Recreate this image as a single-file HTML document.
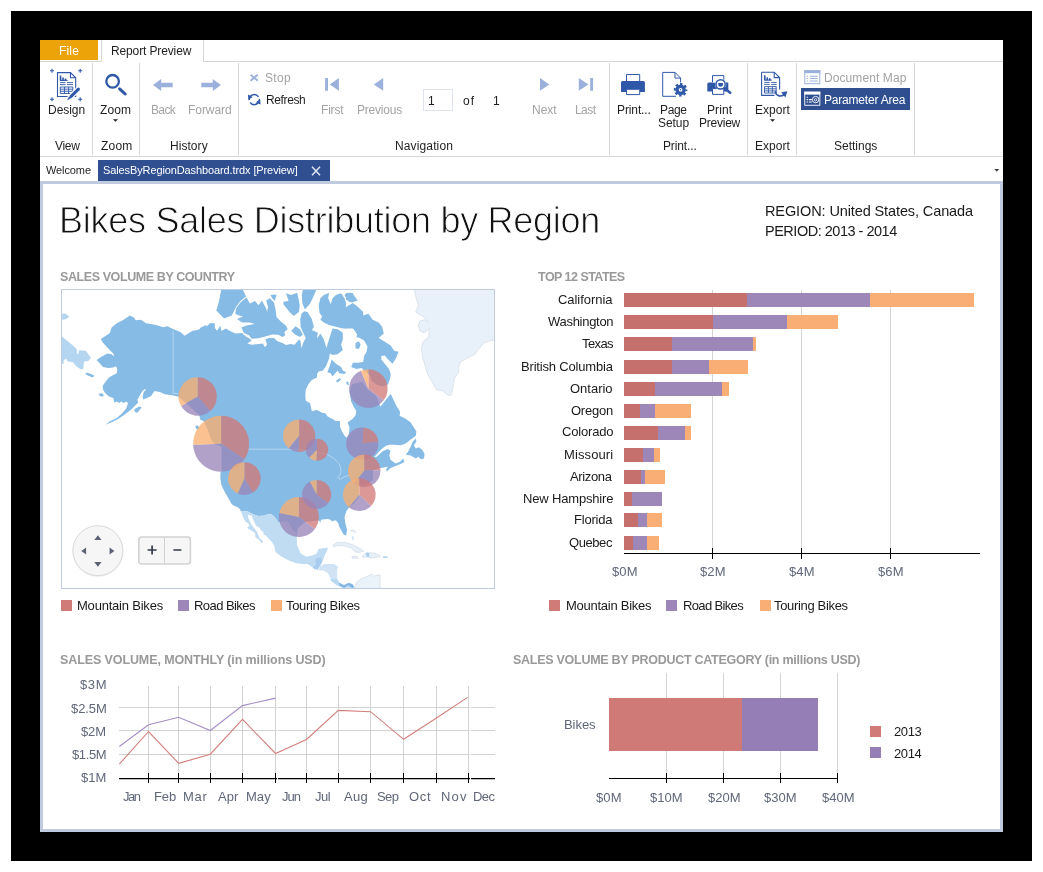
<!DOCTYPE html>
<html><head><meta charset="utf-8">
<style>
*{box-sizing:border-box;margin:0;padding:0}
html,body{width:1043px;height:872px;background:#fff;overflow:hidden}
body{font-family:"Liberation Sans",sans-serif;position:relative;color:#222}
.abs{position:absolute}
.t{position:absolute;white-space:nowrap;line-height:1;will-change:transform}
.sep{position:absolute;width:1px;background:#d6d6d6;top:63px;height:92px}
svg{position:absolute;overflow:visible}
</style></head><body>
<div class="abs" style="left:11px;top:11px;width:1021px;height:850px;background:#000"></div>
<div class="abs" style="left:40px;top:40px;width:963px;height:792px;background:#fff"></div>
<!-- ribbon tab row -->
<div class="abs" style="left:40px;top:40px;width:58px;height:20px;background:#eca30a"></div>
<div class="abs" style="left:40px;top:61px;width:963px;height:1px;background:#d6d6d6"></div>
<div class="abs" style="left:101px;top:40px;width:103px;height:22px;background:#fff;border-left:1px solid #d6d6d6;border-right:1px solid #d6d6d6"></div>
<div class="abs" style="left:40px;top:156px;width:963px;height:1px;background:#d6d6d6"></div>
<div class="sep" style="left:92px"></div><div class="sep" style="left:139px"></div><div class="sep" style="left:238px"></div>
<div class="sep" style="left:609px"></div><div class="sep" style="left:747px"></div><div class="sep" style="left:796px"></div><div class="sep" style="left:914px"></div>
<!-- doc tabs -->
<div class="abs" style="left:98px;top:160px;width:232px;height:21px;background:#2f4f91"></div>
<!-- report area -->
<div class="abs" style="left:40px;top:181px;width:963px;height:651px;border:3px solid #c0cbe0;background:#fff"></div>
<!-- ribbon icons -->
<div class="abs" style="left:801px;top:88px;width:109px;height:22px;background:#2f4f91"></div>
<div class="abs" style="left:423px;top:89px;width:30px;height:22px;border:1px solid #dfe4ec;background:#fff"></div>
<svg width="1043" height="200" style="left:0;top:0" viewBox="0 0 1043 200">
<g fill="none" stroke="#2f58a8" stroke-width="1">
 <!-- design icon -->
 <path d="M50 70.7h4M52 68.7v4M78.2 70.7h4M80.2 68.7v4M50 99.2h4M52 97.2v4M78.2 99.2h4M80.2 97.2v4" stroke-width="1.1"/>
 <path d="M57.5 72.6h13l5.2 5.2v18.7h-18.2z M70.5 72.6v5.2h5.2" stroke-width="1.1"/>
 <path d="M60.5 75.5v5M63 77.5v3M65.5 78.5v2" stroke-width="1.6"/>
 <path d="M60 80.4h7.5" stroke-width="1.2"/>
 <path d="M60 82.6h5.5M67 82.6h6M60 84.6h5.5M67 84.6h6" stroke-width="0.9"/>
 <path d="M60.3 87h12.5v6.5h-12.5zM60.3 89.2h12.5M60.3 91.3h12.5M64.5 87v6.5M68.6 87v6.5" stroke-width="0.9"/>
 <path d="M78.6 88.9L69.2 98.3" stroke="#fff" stroke-width="5.4" stroke-linecap="butt"/>
 <path d="M78.4 89.1L71 96.5" stroke-width="3.1" stroke-linecap="round"/>
 <path d="M69.2 96.8l-1.6 2.9 3-1.4z" fill="#2f58a8" stroke-width="0.5"/>
 <!-- zoom icon -->
 <circle cx="112.6" cy="81.3" r="6.3" stroke-width="2.3"/>
 <path d="M119.6 88.8L125.2 94" stroke-width="3" stroke-linecap="round"/>
 <!-- refresh -->
 <path d="M249.2 100.2a5.1 5.1 0 0 1 9.3-3.4" stroke-width="1.4"/>
 <path d="M259.4 98.8a5.1 5.1 0 0 1 -9.3 3.5" stroke-width="1.4"/>
 <path d="M247.9 94.6l0.5 5.2 4.3-2.9z" fill="#2f58a8" stroke="none"/>
 <path d="M260.6 104.6l-0.5-5.2-4.3 2.9z" fill="#2f58a8" stroke="none"/>
</g>
<g fill="#1e1e1e"><path d="M113 119.2h5l-2.5 2.6z"/><path d="M770 119.2h5l-2.5 2.6z"/><path d="M994.3 169h5l-2.5 2.8z" fill="#444"/></g>
<g fill="#9cb0dc">
 <!-- back / forward -->
 <path d="M153 85l8.2-6v3.8h11.5v4.4h-11.5v3.8z"/>
 <path d="M221 85l-8.2-6v3.8h-11.5v4.4h11.5v3.8z"/>
 <!-- stop -->
 <path d="M250.5 74.6L257.8 80.8M257.8 74.6L250.5 80.8" stroke="#9cb0dc" stroke-width="1.9" fill="none"/>
 <!-- first prev next last -->
 <path d="M325.1 78h2.9v12.7h-2.9zM329.8 84.4l9.1-6.4v12.7z"/>
 <path d="M373.8 84.4l9.4-6.4v12.7z"/>
 <path d="M549.3 84.4l-9.3-6.4v12.7z"/>
 <path d="M590.2 78h2.9v12.7h-2.9zM588.4 84.4l-9.6-6.4v12.7z"/>
</g>
<!-- print -->
<g fill="#2f58a8" stroke="none">
 <path d="M622.6 81h20.7a1.6 1.6 0 0 1 1.6 1.6v9.4h-5v-3h-13.4v3h-5.5v-9.4a1.6 1.6 0 0 1 1.6-1.6z"/>
</g>
<g fill="#fff" stroke="#2f58a8" stroke-width="1">
 <path d="M626.5 81v-6.5h13.2v6.5" />
 <path d="M626.5 89.3h13.2v5.3h-13.2z"/>
 <!-- page setup -->
 <path d="M662.7 72.4h12.3l5.6 5.7v4.4M675 72.4v5.7h5.6M676 96.3h-13.3v-23.9" fill="none"/>
</g>
<g>
 <circle cx="680.6" cy="89.8" r="5.2" fill="#2f58a8"/>
 <circle cx="680.6" cy="89.8" r="5.8" fill="none" stroke="#2f58a8" stroke-width="2" stroke-dasharray="2.5 2.055" stroke-dashoffset="1.25"/>
 <circle cx="680.6" cy="89.8" r="1.9" fill="#fff"/>
 <circle cx="680.6" cy="89.8" r="0.7" fill="#2f58a8"/>
</g>
<!-- print preview -->
<g>
 <path d="M708.8 82.4h19.5v9h-21v-7.5a1.5 1.5 0 0 1 1.5-1.5z" fill="#2f58a8"/>
 <path d="M712.5 82.4v-6.8h11.3v6.8M712.5 88.6h11.3v5.8h-11.3z" fill="#fff" stroke="#2f58a8" stroke-width="1"/>
 <circle cx="720.6" cy="84.4" r="5.6" fill="#fff"/>
 <circle cx="720.6" cy="84.4" r="4.6" fill="#fff" stroke="#2f58a8" stroke-width="1.5"/>
 <path d="M718.2 83h4.8v1.4a2.4 2.4 0 0 1-4.8 0z" fill="#2f58a8"/>
 <path d="M724.4 88.2l5.8 4.6" stroke="#2f58a8" stroke-width="2.6" stroke-linecap="round"/>
</g>
<!-- export -->
<g fill="none" stroke="#2f58a8" stroke-width="1.1">
 <path d="M761.6 72.2h12.6l5.4 5.4v12M774.2 72.2v5.4h5.4M774.5 95.4h-12.9v-23.2"/>
 <path d="M764.8 75.2v5M767.3 77.2v3M769.8 78.2v2" stroke-width="1.6"/>
 <path d="M764.2 80.1h7.5" stroke-width="1.2"/>
 <path d="M764.2 82.4h5.5M771.2 82.4h5.5M764.2 84.4h5.5M771.2 84.4h5.5" stroke-width="0.9"/>
 <path d="M764.5 86.6h11.7v6.4h-11.7zM764.5 88.8h11.7M764.5 90.9h11.7M768.4 86.6v6.4M772.3 86.6v6.4" stroke-width="0.9"/>
 <path d="M775.3 91.2c0.4 4.8 5 5.8 8.9 3.6" stroke-width="1.6"/>
 <path d="M781.2 92.2l6.2-1-2 6.2z" fill="#2f58a8" stroke="none"/>
</g>
<!-- document map icon -->
<g>
 <rect x="804.8" y="70.7" width="15" height="13" fill="#fff" stroke="#9cb0dc" stroke-width="1"/>
 <rect x="804.3" y="70.2" width="16" height="3" fill="#9cb0dc"/>
 <path d="M806.8 76.2h1.2M806.8 78.6h1.2M806.8 81h1.2M809.8 76.2h8M809.8 78.6h8M809.8 81h8" stroke="#9cb0dc" stroke-width="1" fill="none"/>
</g>
<!-- parameter area icon -->
<g>
 <rect x="804.3" y="91.7" width="16" height="14" fill="#fff"/>
 <rect x="804.3" y="91.7" width="16" height="2.6" fill="#fff"/>
 <rect x="805.2" y="94.6" width="14.2" height="10.2" fill="#2f4f91"/>
 <path d="M806.6 97.2h1.3M806.6 99.6h1.3M806.6 102h1.3M808.8 99.6h3M808.8 102h3" stroke="#fff" stroke-width="1.1" fill="none"/>
 <circle cx="815.6" cy="99.6" r="3.2" fill="none" stroke="#fff" stroke-width="0.9"/>
 <circle cx="815.6" cy="99.8" r="1.2" fill="none" stroke="#fff" stroke-width="0.8"/>
</g>
<!-- close x on tab -->
<path d="M312 166.8l8 8.4M320 166.8l-8 8.4" stroke="#dfe5f2" stroke-width="1.5" fill="none"/>
</svg>

<svg width="434" height="300" style="left:61px;top:289px;overflow:hidden;background:#fff" viewBox="61 289 434 300">
<path d="M60.0 335.3 L61.7 336.2 L66.9 340.5 L72.0 344.8 L76.7 349.1 L77.2 354.2 L78.6 353.4 L78.9 350.3 L85.8 350.8 L91.0 357.7 L88.4 361.1 L84.1 361.6 L83.2 368.9 L80.6 369.2 L76.3 366.3 L72.9 362.0 L67.7 361.6 L66.0 358.5 L63.8 360.3 L63.4 363.7 L60.0 364.6Z" fill="#b5d6f0" />
<path d="M60.0 313.8 L65.2 313.5 L69.5 316.4 L66.0 319.3 L60.0 319.8Z" fill="#b5d6f0" />
<path d="M414.0 288.0 L496.0 288.0 L496.0 339.6 L488.8 341.3 L483.6 343.0 L479.3 348.2 L475.0 354.2 L466.4 358.5 L460.4 362.0 L458.7 367.1 L458.7 372.3 L454.4 378.3 L453.5 384.3 L451.3 394.7 L448.4 395.5 L443.2 391.2 L436.3 389.5 L432.0 381.8 L427.7 374.0 L425.1 365.4 L422.6 356.8 L421.3 348.2 L423.4 341.3 L428.6 337.0 L429.4 328.4 L424.3 332.7 L420.0 331.0 L418.3 325.0 L420.0 320.7 L425.1 319.8 L428.6 322.4 L424.3 317.2 L420.0 314.7 L415.7 312.1 L418.3 305.2 L415.7 296.6Z" fill="#e8f1fa" stroke="#d6dde6" stroke-width="0.8"/>
<path d="M100.8 339.1 L105.1 336.2 L109.9 333.1 L111.6 327.6 L116.8 323.3 L123.7 319.8 L129.7 315.5 L134.0 317.6 L135.7 320.2 L140.9 319.8 L146.0 323.3 L156.3 325.0 L163.2 327.2 L167.5 326.2 L173.5 329.3 L180.4 331.9 L184.7 335.7 L188.2 333.6 L192.5 330.7 L197.6 330.1 L202.8 327.2 L206.2 326.7 L210.0 323.3 L214.8 323.3 L214.8 438.0 L207.9 423.9 L204.5 421.3 L201.9 420.5 L199.3 415.3 L180.4 398.1 L178.7 396.7 L173.5 395.5 L164.9 394.3 L159.8 392.1 L154.6 390.9 L152.9 393.3 L151.2 396.0 L146.9 398.1 L143.1 399.5 L142.6 396.4 L143.8 392.1 L146.0 389.5 L144.3 389.2 L141.7 392.1 L139.5 396.0 L137.4 399.8 L138.3 402.4 L135.7 405.0 L132.3 408.4 L128.0 411.9 L123.7 415.3 L118.5 418.7 L111.6 422.2 L105.6 424.8 L109.9 421.3 L116.8 417.9 L121.9 413.6 L126.2 408.4 L128.0 403.3 L126.2 401.5 L123.7 402.9 L121.1 401.5 L119.3 402.9 L116.8 401.5 L114.2 402.4 L113.3 398.1 L109.0 396.4 L105.1 392.9 L103.0 389.5 L102.7 385.7 L105.6 381.8 L109.0 377.5 L113.3 374.9 L116.8 373.2 L117.3 368.9 L115.9 366.3 L113.3 367.5 L108.2 368.0 L103.0 367.1 L99.2 362.8 L96.6 359.9 L101.3 356.8 L107.3 353.4 L111.6 354.2 L114.2 356.5 L113.3 353.4 L109.9 350.3 L106.4 346.5 L103.0 342.7Z" fill="#85bbe5" />
<path d="M85.8 372.6 L90.1 373.5 L94.4 375.7 L92.7 377.5 L88.4 375.7 L85.8 374.5Z" fill="#85bbe5" />
<path d="M98.7 393.8 L102.1 393.3 L103.9 395.5 L102.1 396.7 L99.2 395.5Z" fill="#85bbe5" />
<path d="M134.3 409.3 L139.1 406.4 L141.7 407.6 L137.4 412.7 L134.8 411.9Z" fill="#85bbe5" />
<path d="M200.0 327.9 L206.0 325.0 L207.7 328.4 L210.7 323.3 L213.8 326.7 L217.2 330.7 L220.3 325.5 L221.5 331.0 L225.8 328.4 L230.1 331.0 L235.3 333.6 L242.1 333.1 L245.6 336.2 L249.9 338.7 L251.6 340.5 L247.3 343.4 L251.6 344.8 L258.5 343.9 L262.8 343.4 L265.0 347.3 L267.1 344.4 L265.4 339.6 L268.8 337.9 L274.0 337.9 L277.4 341.3 L282.6 343.0 L286.0 345.1 L290.3 343.9 L294.6 344.8 L298.9 339.6 L300.6 341.3 L301.5 348.2 L303.2 342.7 L305.8 337.9 L303.2 332.7 L300.6 326.7 L300.3 319.0 L301.5 313.8 L304.1 311.2 L307.5 312.1 L311.8 319.0 L313.9 326.7 L311.8 330.1 L317.8 332.7 L317.0 338.7 L320.4 333.6 L323.9 339.6 L326.4 348.2 L329.0 339.6 L332.5 328.4 L337.6 329.3 L342.8 332.7 L342.8 339.6 L341.1 344.8 L342.8 349.9 L337.6 354.2 L332.5 355.1 L329.9 353.4 L329.0 358.5 L326.4 365.4 L323.0 370.6 L318.7 371.4 L317.0 374.0 L317.0 377.5 L311.8 380.0 L308.4 384.3 L305.8 389.5 L305.3 395.5 L305.8 400.7 L310.1 403.3 L311.8 411.0 L317.0 410.1 L322.1 412.7 L327.3 416.2 L326.6 414.4 L200.0 414.4Z" fill="#85bbe5" />
<path d="M221.5 288.0 L242.1 288.0 L246.1 296.6 L240.4 300.9 L236.1 306.9 L231.8 315.5 L224.1 318.6 L216.3 310.4 L218.9 301.8Z" fill="#85bbe5" />
<path d="M246.4 297.5 L249.9 303.5 L255.0 300.9 L258.5 305.2 L261.9 300.4 L266.2 308.6 L267.1 312.1 L268.0 306.9 L266.2 300.4 L269.7 298.3 L274.0 302.6 L275.7 310.4 L276.6 317.2 L280.9 321.5 L286.0 325.8 L287.7 329.3 L284.3 331.9 L285.2 335.3 L282.6 337.0 L278.3 334.8 L272.3 334.4 L266.2 336.2 L258.5 338.2 L251.6 338.7 L249.0 335.3 L243.9 333.1 L241.3 327.6 L246.4 325.5 L254.7 324.1 L249.9 322.4 L242.1 322.4 L237.0 319.0 L243.0 316.4 L237.0 314.7 L235.3 313.8 L236.1 308.6 L240.4 302.6Z" fill="#85bbe5" />
<path d="M270.5 294.9 L276.6 294.5 L274.8 300.9 L272.3 298.3Z" fill="#85bbe5" />
<path d="M286.0 293.2 L291.2 294.9 L297.2 292.8 L298.4 298.3 L299.8 305.2 L298.9 312.1 L293.8 315.9 L289.5 312.1 L283.4 304.3 L283.4 301.8 L288.6 300.9Z" fill="#85bbe5" />
<path d="M303.2 288.0 L317.0 288.0 L313.5 296.6 L310.1 303.5 L304.9 309.5 L302.4 303.5 L301.8 294.9Z" fill="#85bbe5" />
<path d="M291.2 331.0 L295.5 326.2 L299.8 329.3 L302.9 334.4 L299.8 337.0 L295.5 334.8Z" fill="#85bbe5" />
<path d="M318.7 305.2 L320.4 298.3 L323.9 294.9 L329.0 292.8 L328.2 298.3 L330.7 304.3 L332.5 298.3 L335.9 294.9 L341.1 293.2 L344.5 298.3 L346.2 303.5 L345.4 308.6 L350.0 306.9 L354.8 306.9 L354.8 328.4 L350.0 328.4 L342.8 328.4 L335.9 326.7 L329.0 325.0 L323.9 322.4 L320.4 319.8 L322.1 316.4 L319.6 312.9Z" fill="#85bbe5" />
<path d="M346.2 293.2 L350.0 292.8 L353.1 293.2 L353.1 301.8 L350.0 301.8 L347.1 300.0 L344.5 294.9Z" fill="#85bbe5" />
<path d="M331.6 359.4 L335.9 363.7 L341.1 367.1 L342.8 370.6 L346.2 372.3 L344.5 374.0 L339.3 373.2 L337.6 370.6 L332.5 376.6 L330.7 373.2 L327.3 372.3 L329.9 365.4Z" fill="#85bbe5" />
<path d="M335.9 380.9 L339.3 378.3 L341.4 379.2 L337.6 382.6Z" fill="#85bbe5" />
<path d="M346.2 381.8 L348.3 381.8 L348.8 385.2 L346.6 384.3Z" fill="#85bbe5" />
<path d="M346.0 293.2 L352.9 294.0 L357.7 300.4 L352.0 302.6 L349.4 301.8 L346.0 299.2Z" fill="#85bbe5" />
<path d="M345.1 306.9 L346.0 306.9 L352.9 303.1 L358.0 306.9 L363.2 312.1 L363.2 315.5 L368.4 313.8 L372.7 319.8 L378.7 322.4 L382.1 326.7 L383.8 333.6 L378.7 337.9 L385.6 342.2 L390.7 345.6 L394.2 350.8 L398.5 351.7 L395.9 358.5 L392.4 363.7 L387.3 358.5 L384.7 355.4 L381.3 356.0 L381.3 359.4 L384.7 363.7 L389.0 368.9 L390.7 374.0 L389.9 379.2 L388.1 384.3 L383.0 386.4 L377.0 384.7 L371.8 380.9 L370.1 375.7 L366.6 372.3 L363.2 369.7 L361.5 368.0 L356.3 368.9 L351.2 367.1 L352.9 362.8 L358.0 362.8 L363.2 362.0 L364.1 356.0 L366.6 351.7 L367.5 346.5 L364.1 340.5 L359.8 337.9 L356.3 337.0 L357.2 334.4 L353.7 329.3 L350.3 326.7 L346.0 328.4 L345.1 328.4Z" fill="#85bbe5" />
<path d="M355.5 343.0 L358.9 341.3 L360.6 344.8 L358.9 349.1 L355.5 348.2Z" fill="#85bbe5" />
<path d="M199.3 415.3 L199.3 413.0 L325.0 413.0 L327.3 416.2 L333.3 419.6 L335.0 420.7 L340.0 421.3 L340.0 426.4 L342.0 431.4 L344.5 435.8 L347.0 437.7 L348.9 434.0 L349.5 427.6 L347.6 422.6 L352.7 418.8 L355.8 415.0 L355.8 413.0 L398.1 413.0 L398.1 415.0 L405.7 418.8 L410.7 422.6 L413.9 427.6 L416.4 431.4 L415.8 435.8 L410.7 439.6 L405.7 443.4 L400.6 445.3 L394.3 444.7 L389.3 444.7 L385.5 445.9 L381.7 449.1 L377.9 452.9 L374.1 457.3 L376.7 456.7 L383.0 451.0 L388.0 449.1 L390.5 451.0 L389.3 455.4 L390.5 459.8 L395.6 463.6 L400.0 461.7 L403.2 458.5 L404.4 462.3 L398.1 464.9 L390.5 468.0 L386.8 471.8 L386.1 469.3 L388.0 466.8 L383.6 467.4 L380.4 468.0 L372.9 470.5 L372.9 480.6 L367.8 483.2 L359.0 485.7 L359.0 497.0 L353.9 503.4 L348.9 507.8 L346.4 510.9 L344.5 517.2 L345.4 523.2 L347.1 530.1 L346.2 535.6 L343.6 534.4 L342.1 531.7 L339.1 526.5 L338.4 523.5 L336.1 520.5 L333.9 520.5 L332.4 521.6 L330.2 519.4 L327.2 519.0 L320.9 519.7 L320.5 522.7 L319.0 520.5 L304.8 522.0 L297.4 528.7 L297.4 533.9 L292.9 530.2 L288.4 522.7 L284.7 520.9 L279.6 522.8 L277.9 521.7 L276.4 519.4 L274.7 517.1 L271.2 514.2 L266.6 514.5 L266.1 515.6 L258.0 515.9 L253.4 514.2 L249.4 512.5 L247.7 511.3 L243.6 511.3 L240.8 511.6 L240.2 509.6 L237.9 507.3 L235.0 506.2 L231.8 504.3 L228.4 498.3 L224.9 492.3 L221.5 485.4 L220.3 478.5 L220.6 471.6 L221.7 472.0 L221.7 447.0 L215.0 444.0 L211.5 440.5 L208.0 430.5 L203.4 420.4 L200.3 419.8Z" fill="#85bbe5" />
<path d="M195.5 426.0 L198.0 425.3 L199.2 428.0 L197.5 429.6 L195.8 428.5Z" fill="#85bbe5" />
<path d="M355.8 417.0 L356.3 411.0 L353.7 406.7 L351.2 401.5 L349.4 391.2 L352.0 384.3 L362.3 381.8 L367.5 389.5 L376.1 395.5 L380.4 406.7 L390.7 393.8 L395.9 405.0 L400.2 411.9 L399.3 416.2 L398.1 417.0Z" fill="#85bbe5" />
<path d="M415.8 438.4 L412.6 442.1 L410.7 446.6 L408.2 451.6 L405.7 454.8 L410.7 455.4 L415.8 458.5 L418.3 456.7 L420.8 459.2 L424.0 458.5 L424.6 454.1 L422.1 449.7 L418.9 447.2 L415.8 448.5 L413.9 445.3 L416.4 441.5Z" fill="#85bbe5" />
<path d="M240.8 511.6 L243.6 511.3 L247.7 511.3 L249.4 512.5 L253.4 514.2 L258.0 515.9 L266.1 515.6 L266.6 514.5 L271.2 514.2 L274.7 517.1 L276.4 519.4 L277.9 521.7 L279.6 522.8 L284.7 520.9 L288.4 522.7 L292.9 530.2 L297.4 533.9 L296.9 536.7 L296.9 544.6 L300.5 553.2 L306.2 556.8 L312.7 555.4 L317.0 553.2 L318.4 548.9 L327.8 547.5 L327.1 551.1 L324.9 554.7 L323.5 559.0 L322.0 562.6 L316.3 563.3 L312.7 567.6 L307.7 564.0 L301.9 564.0 L296.2 563.3 L289.0 560.4 L281.8 556.8 L276.0 552.5 L274.6 548.9 L275.0 548.2 L273.8 545.3 L271.8 541.8 L268.9 538.9 L266.1 535.8 L263.5 534.3 L263.2 532.0 L260.9 530.3 L259.7 527.7 L256.6 526.3 L254.9 523.4 L252.8 518.8 L251.7 515.6 L248.8 515.1 L247.9 515.1 L248.5 518.8 L250.5 522.8 L252.8 526.6 L255.1 529.2 L257.2 532.0 L258.0 534.3 L259.2 537.2 L260.3 538.7 L262.6 540.4 L263.2 541.8 L261.5 543.3 L260.3 541.0 L258.0 538.9 L255.4 537.2 L255.1 533.2 L252.8 531.5 L250.0 529.7 L247.4 528.3 L247.4 527.2 L249.4 525.7 L248.5 523.4 L245.9 522.0 L244.2 519.4 L242.5 515.4 L241.3 511.9Z" fill="#c0dcf2" />
<path d="M312.7 567.6 L316.3 563.3 L314.9 560.4 L316.3 558.2 L321.3 557.5 L322.0 562.6 L319.9 566.2 L317.7 569.8 L314.1 569.0Z" fill="#a9cdef" />
<path d="M319.9 566.2 L324.9 564.0 L333.6 564.0 L337.9 566.2 L337.1 571.9 L337.1 578.4 L330.7 578.4 L327.8 573.3 L323.5 570.5 L318.5 570.5Z" fill="#cfe3f5" />
<path d="M330.7 578.4 L337.1 578.4 L339.3 582.7 L345.1 584.9 L349.4 582.7 L353.7 584.9 L354.4 587.7 L342.2 587.7 L336.4 584.9 L330.7 580.5Z" fill="#b9d8f1" />
<path d="M339.3 582.7 L343.6 585.6 L347.9 583.1 L352.2 584.1 L354.0 587.0 L352.2 588.0 L347.9 584.9 L344.3 588.0 L339.3 585.6Z" fill="#80b4e2" />
<path d="M354.4 588.5 L356.6 582.0 L362.3 578.4 L369.5 575.5 L371.7 574.1 L373.8 576.2 L380.0 574.8 L380.0 592.0 L354.4 592.0Z" fill="#eaf2fa" stroke="#d6dde6" stroke-width="0.8"/>
<path d="M332.8 545.3 L337.1 542.4 L345.1 542.4 L352.2 544.6 L359.4 548.2 L363.8 551.1 L359.4 552.5 L355.1 551.8 L351.5 548.2 L345.1 546.0 L337.9 545.3 L334.3 546.7Z" fill="#e6f0f9" stroke="#d6dde6" stroke-width="0.8"/>
<path d="M352.0 556.4 L357.3 556.4 L357.7 558.2 L352.2 558.2Z" fill="#e6f0f9" stroke="#d6dde6" stroke-width="0.8"/>
<path d="M362.3 556.1 L366.6 552.5 L373.8 553.2 L380.0 555.4 L380.0 556.8 L373.8 557.5 L370.9 558.2 L368.1 556.8 L363.0 557.5Z" fill="#e6f0f9" stroke="#d6dde6" stroke-width="0.8"/>
<path d="M365.9 552.9 L369.2 552.9 L369.2 557.2 L366.6 556.4Z" fill="#a9cdef" />
<path d="M383.0 556.2 L387.6 556.2 L387.6 558.0 L383.0 558.0Z" fill="#b9d8f1" />
<path d="M350.1 530.5 L354.4 530.2 L355.4 533.1 L353.7 531.4Z" fill="#e6f0f9" stroke="#d6dde6" stroke-width="0.8"/>
<path d="M351.5 536.7 L353.4 536.0 L354.0 540.3 L352.2 539.6Z" fill="#cfe3f5" />
<path d="M173.2 331V393.5H178" fill="none" stroke="#b4d4ef" stroke-width="1"/>
<path d="M248.2 449.2 L289.5 449.2 L310.1 451.0 L327.3 454.4 L334.2 458.7 L339.3 463.9 L341.1 469.9 L340.2 475.0 L337.6 477.6 L340.2 479.3 L344.5 476.8 L350.0 475.0" fill="none" stroke="#b4d4ef" stroke-width="1"/>
<path d="M197.7 396.5L197.70 377.30A19.2 19.2 0 0 1 210.30 410.99Z" fill="rgba(209,120,118,0.76)"/><path d="M197.7 396.5L210.30 410.99A19.2 19.2 0 0 1 181.07 406.10Z" fill="rgba(152,132,184,0.76)"/><path d="M197.7 396.5L181.07 406.10A19.2 19.2 0 0 1 197.70 377.30Z" fill="rgba(250,174,110,0.76)"/>
<path d="M221.1 443.8L221.10 415.80A28 28 0 0 1 244.39 459.34Z" fill="rgba(209,120,118,0.76)"/><path d="M221.1 443.8L244.39 459.34A28 28 0 0 1 193.12 444.78Z" fill="rgba(152,132,184,0.76)"/><path d="M221.1 443.8L193.12 444.78A28 28 0 0 1 221.10 415.80Z" fill="rgba(250,174,110,0.76)"/>
<path d="M244.4 478.5L244.40 462.20A16.3 16.3 0 0 1 252.55 492.62Z" fill="rgba(209,120,118,0.76)"/><path d="M244.4 478.5L252.55 492.62A16.3 16.3 0 0 1 237.77 493.39Z" fill="rgba(152,132,184,0.76)"/><path d="M244.4 478.5L237.77 493.39A16.3 16.3 0 0 1 244.40 462.20Z" fill="rgba(250,174,110,0.76)"/>
<path d="M299.1 435.8L299.10 419.55A16.25 16.25 0 1 1 298.25 452.03Z" fill="rgba(209,120,118,0.76)"/><path d="M299.1 435.8L298.25 452.03A16.25 16.25 0 0 1 288.76 448.34Z" fill="rgba(152,132,184,0.76)"/><path d="M299.1 435.8L288.76 448.34A16.25 16.25 0 0 1 299.10 419.55Z" fill="rgba(250,174,110,0.76)"/>
<path d="M317.0 449.8L317.00 438.75A11.05 11.05 0 1 1 316.42 460.83Z" fill="rgba(209,120,118,0.76)"/><path d="M317.0 449.8L316.42 460.83A11.05 11.05 0 0 1 309.11 457.53Z" fill="rgba(250,174,110,0.76)"/><path d="M317.0 449.8L309.11 457.53A11.05 11.05 0 0 1 317.00 438.75Z" fill="rgba(152,132,184,0.76)"/>
<path d="M298.9 516.9L298.90 496.90A20 20 0 0 1 314.87 528.94Z" fill="rgba(209,120,118,0.76)"/><path d="M298.9 516.9L314.87 528.94A20 20 0 0 1 279.27 513.08Z" fill="rgba(152,132,184,0.76)"/><path d="M298.9 516.9L279.27 513.08A20 20 0 0 1 298.90 496.90Z" fill="rgba(250,174,110,0.76)"/>
<path d="M316.6 494.4L316.60 479.90A14.5 14.5 0 0 1 328.18 503.13Z" fill="rgba(209,120,118,0.76)"/><path d="M316.6 494.4L328.18 503.13A14.5 14.5 0 1 1 309.93 481.53Z" fill="rgba(152,132,184,0.76)"/><path d="M316.6 494.4L309.93 481.53A14.5 14.5 0 0 1 316.60 479.90Z" fill="rgba(250,174,110,0.76)"/>
<path d="M368.4 388.6L368.40 369.30A19.3 19.3 0 0 1 383.73 400.32Z" fill="rgba(209,120,118,0.76)"/><path d="M368.4 388.6L383.73 400.32A19.3 19.3 0 1 1 360.80 370.86Z" fill="rgba(152,132,184,0.76)"/><path d="M368.4 388.6L360.80 370.86A19.3 19.3 0 0 1 368.40 369.30Z" fill="rgba(250,174,110,0.76)"/>
<path d="M362.3 443.6L363.43 427.44A16.2 16.2 0 0 1 378.38 441.63Z" fill="rgba(209,120,118,0.76)"/><path d="M362.3 443.6L378.38 441.63A16.2 16.2 0 1 1 363.43 427.44Z" fill="rgba(152,132,184,0.76)"/>
<path d="M364.2 470.8L364.20 454.50A16.3 16.3 0 0 1 380.48 469.95Z" fill="rgba(209,120,118,0.76)"/><path d="M364.2 470.8L380.48 469.95A16.3 16.3 0 0 1 353.81 483.36Z" fill="rgba(152,132,184,0.76)"/><path d="M364.2 470.8L353.81 483.36A16.3 16.3 0 0 1 364.20 454.50Z" fill="rgba(250,174,110,0.76)"/>
<path d="M359.3 494.7L359.30 478.30A16.4 16.4 0 0 1 371.10 506.09Z" fill="rgba(209,120,118,0.76)"/><path d="M359.3 494.7L371.10 506.09A16.4 16.4 0 0 1 348.85 507.34Z" fill="rgba(152,132,184,0.76)"/><path d="M359.3 494.7L348.85 507.34A16.4 16.4 0 0 1 359.30 478.30Z" fill="rgba(250,174,110,0.76)"/>
<circle cx="97.9" cy="551.5" r="25.5" fill="rgba(0,0,0,0.06)"/>
<circle cx="97.9" cy="550.7" r="25" fill="#f6f6f6" stroke="#d9d9d9" stroke-width="1"/>
<path d="M97.9 535.3l3.6 4.6h-7.2zM97.9 566.7l3.6-4.6h-7.2zM81.3 551l4.8-3.5v7zM114.4 551l-4.8-3.5v7z" fill="#5a6273"/>
<rect x="138.8" y="537" width="51.6" height="27" rx="3" fill="#f6f6f6" stroke="#d2d2d2" stroke-width="1.6"/>
<path d="M164.5 537.5v26" stroke="#d2d2d2" stroke-width="1"/>
<path d="M147.6 550h9M152.1 545.5v9M173.4 550h8" stroke="#333a48" stroke-width="1.7" fill="none"/>
</svg>
<div class="abs" style="left:61px;top:289px;width:434px;height:300px;border:1px solid #bfcbe2"></div>
<svg width="1043" height="872" style="left:0;top:0" viewBox="0 0 1043 872" shape-rendering="crispEdges">
<g stroke="#d4d4d4" stroke-width="1">
<path d="M712.5 290V553"/>
<path d="M801.5 290V553"/>
<path d="M890.5 290V553"/>
</g>
<rect x="624" y="293.0" width="122.9" height="14" fill="#c5706d"/>
<rect x="746.9" y="293.0" width="122.6" height="14" fill="#9d87b8"/>
<rect x="869.5" y="293.0" width="104.5" height="14" fill="#f8ae74"/>
<rect x="624" y="315.2" width="88.7" height="14" fill="#c5706d"/>
<rect x="712.7" y="315.2" width="74.3" height="14" fill="#9d87b8"/>
<rect x="787.0" y="315.2" width="51.0" height="14" fill="#f8ae74"/>
<rect x="624" y="337.2" width="48.0" height="14" fill="#c5706d"/>
<rect x="672.0" y="337.2" width="81.0" height="14" fill="#9d87b8"/>
<rect x="753.0" y="337.2" width="3.4" height="14" fill="#f8ae74"/>
<rect x="624" y="360.0" width="48.0" height="14" fill="#c5706d"/>
<rect x="672.0" y="360.0" width="37.0" height="14" fill="#9d87b8"/>
<rect x="709.0" y="360.0" width="39.0" height="14" fill="#f8ae74"/>
<rect x="624" y="381.6" width="30.9" height="14" fill="#c5706d"/>
<rect x="654.9" y="381.6" width="67.1" height="14" fill="#9d87b8"/>
<rect x="722.0" y="381.6" width="7.0" height="14" fill="#f8ae74"/>
<rect x="624" y="403.6" width="16.0" height="14" fill="#c5706d"/>
<rect x="640.0" y="403.6" width="14.9" height="14" fill="#9d87b8"/>
<rect x="654.9" y="403.6" width="36.1" height="14" fill="#f8ae74"/>
<rect x="624" y="425.5" width="34.1" height="14" fill="#c5706d"/>
<rect x="658.1" y="425.5" width="26.9" height="14" fill="#9d87b8"/>
<rect x="685.0" y="425.5" width="6.0" height="14" fill="#f8ae74"/>
<rect x="624" y="447.9" width="19.1" height="14" fill="#c5706d"/>
<rect x="643.1" y="447.9" width="11.0" height="14" fill="#9d87b8"/>
<rect x="654.1" y="447.9" width="6.0" height="14" fill="#f8ae74"/>
<rect x="624" y="470.1" width="17.1" height="14" fill="#c5706d"/>
<rect x="641.1" y="470.1" width="4.0" height="14" fill="#9d87b8"/>
<rect x="645.1" y="470.1" width="19.9" height="14" fill="#f8ae74"/>
<rect x="624" y="492.3" width="8.2" height="14" fill="#c5706d"/>
<rect x="632.2" y="492.3" width="29.8" height="14" fill="#9d87b8"/>
<rect x="624" y="513.3" width="14.1" height="14" fill="#c5706d"/>
<rect x="638.1" y="513.3" width="9.0" height="14" fill="#9d87b8"/>
<rect x="647.1" y="513.3" width="14.9" height="14" fill="#f8ae74"/>
<rect x="624" y="536.2" width="9.2" height="14" fill="#c5706d"/>
<rect x="633.2" y="536.2" width="13.9" height="14" fill="#9d87b8"/>
<rect x="647.1" y="536.2" width="12.0" height="14" fill="#f8ae74"/>
<path d="M624 553.5H980" stroke="#000" stroke-width="1"/>
<path d="M712.5 548v11M801.5 548v11M890.5 548v11" stroke="#000" stroke-width="1"/>
<rect x="549" y="600" width="11" height="10.7" fill="#d17b79"/>
<rect x="666" y="600" width="11" height="10.7" fill="#9d87b8"/>
<rect x="759.5" y="600" width="11" height="10.7" fill="#f8ae74"/>
<rect x="61" y="600.4" width="11" height="10.5" fill="#d17b79"/>
<rect x="178" y="600.4" width="11" height="10.5" fill="#9d87b8"/>
<rect x="271" y="600.4" width="11" height="10.5" fill="#f8ae74"/>
<g stroke="#d3d3d3" stroke-width="1">
<path d="M119.3 707.5H495"/>
<path d="M119.3 730.5H495"/>
<path d="M119.3 754.5H495"/>
<path d="M148.5 686V778"/>
<path d="M178.5 686V778"/>
<path d="M210.5 686V778"/>
<path d="M242.5 686V778"/>
<path d="M275.5 686V778"/>
<path d="M306.5 686V778"/>
<path d="M338.5 686V778"/>
<path d="M370.5 686V778"/>
<path d="M403.5 686V778"/>
<path d="M436.5 686V778"/>
<path d="M468.5 686V778"/>
</g>
<path d="M119 778.65H495" stroke="#000" stroke-width="1.3" shape-rendering="auto"/>
<path d="M148.5 773v10M178.5 773v10M210.5 773v10M242.5 773v10M275.5 773v10M306.5 773v10M338.5 773v10M370.5 773v10M403.5 773v10M436.5 773v10M468.5 773v10" stroke="#000" stroke-width="1.3"/>
</svg>
<svg width="1043" height="872" style="left:0;top:0" viewBox="0 0 1043 872">
<path d="M277 686V784M470 686V784" stroke="#fff" stroke-width="1" shape-rendering="crispEdges"/>
<polyline fill="none" stroke="#a48ec6" stroke-width="1.1" points="119.3,746.5 148.5,724.8 178.7,717.3 210.3,730.5 242.5,705.6 275.7,698.1"/>
<polyline fill="none" stroke="#d4807e" stroke-width="1.1" points="119.3,764.2 148.5,731.5 178.7,763.4 210.3,754.2 242.5,719.3 275.6,753.5 306.5,739.5 338.4,710.4 370.6,711.7 403.6,739.3 436.5,718 467.6,697.4"/>
</svg>
<svg width="1043" height="872" style="left:0;top:0" viewBox="0 0 1043 872" shape-rendering="crispEdges">
<g stroke="#d4d4d4" stroke-width="1">
<path d="M666.3 673V778"/>
<path d="M723.5 673V778"/>
<path d="M780.3 673V778"/>
<path d="M837.4 673V778"/>
</g>
<rect x="608.6" y="697.5" width="133.4" height="53.3" fill="#cf7a77"/>
<rect x="742" y="697.5" width="75.8" height="53.3" fill="#957eb6"/>
<path d="M608.6 778.5H838" stroke="#000" stroke-width="1"/>
<path d="M666.5 773v10M723.5 773v10M780.5 773v10M837.5 773v10" stroke="#000" stroke-width="1"/>
<rect x="870.2" y="726.3" width="10.6" height="10.6" fill="#d17b79"/>
<rect x="870.2" y="747.4" width="10.6" height="10.6" fill="#957eb6"/>
</svg>
<div class="t" style="left:59.3px;top:44.8px;font-size:12px;color:#ffffff;letter-spacing:0.18px;">File</div>
<div class="t" style="left:111.3px;top:44.8px;font-size:12px;color:#1e1e1e;letter-spacing:-0.13px;">Report Preview</div>
<div class="t" style="left:47.6px;top:103.5px;font-size:12px;color:#1e1e1e;letter-spacing:-0.04px;">Design</div>
<div class="t" style="left:100.4px;top:103.5px;font-size:12px;color:#1e1e1e;letter-spacing:0.09px;">Zoom</div>
<div class="t" style="left:150.6px;top:103.5px;font-size:12px;color:#a3a3a3;letter-spacing:-0.64px;">Back</div>
<div class="t" style="left:187.6px;top:103.5px;font-size:12px;color:#a3a3a3;letter-spacing:-0.06px;">Forward</div>
<div class="t" style="left:55.3px;top:140.2px;font-size:12px;color:#1e1e1e;letter-spacing:-0.33px;">View</div>
<div class="t" style="left:100.6px;top:140.2px;font-size:12px;color:#1e1e1e;letter-spacing:0.22px;">Zoom</div>
<div class="t" style="left:169.8px;top:140.2px;font-size:12px;color:#1e1e1e;letter-spacing:0.05px;">History</div>
<div class="t" style="left:265.3px;top:71.8px;font-size:12px;color:#a3a3a3;letter-spacing:0.33px;">Stop</div>
<div class="t" style="left:265.7px;top:93.6px;font-size:12px;color:#1e1e1e;letter-spacing:-0.37px;">Refresh</div>
<div class="t" style="left:320.7px;top:103.5px;font-size:12px;color:#a3a3a3;letter-spacing:-0.20px;">First</div>
<div class="t" style="left:356.8px;top:103.5px;font-size:12px;color:#a3a3a3;letter-spacing:-0.22px;">Previous</div>
<div class="t" style="left:427.6px;top:94.5px;font-size:12px;color:#1e1e1e;letter-spacing:1.62px;">1</div>
<div class="t" style="left:463.0px;top:94.5px;font-size:12px;color:#1e1e1e;letter-spacing:1.00px;">of</div>
<div class="t" style="left:492.8px;top:94.5px;font-size:12px;color:#1e1e1e;letter-spacing:0.36px;">1</div>
<div class="t" style="left:532.3px;top:103.5px;font-size:12px;color:#a3a3a3;">Next</div>
<div class="t" style="left:575.2px;top:103.5px;font-size:12px;color:#a3a3a3;letter-spacing:-0.55px;">Last</div>
<div class="t" style="left:394.7px;top:140.2px;font-size:12px;color:#1e1e1e;letter-spacing:0.13px;">Navigation</div>
<div class="t" style="left:616.6px;top:103.5px;font-size:12px;color:#1e1e1e;letter-spacing:-0.11px;">Print...</div>
<div class="t" style="left:660.4px;top:103.5px;font-size:12px;color:#1e1e1e;letter-spacing:-0.37px;">Page</div>
<div class="t" style="left:657.9px;top:116.7px;font-size:12px;color:#1e1e1e;letter-spacing:-0.05px;">Setup</div>
<div class="t" style="left:706.8px;top:103.5px;font-size:12px;color:#1e1e1e;letter-spacing:0.09px;">Print</div>
<div class="t" style="left:698.7px;top:116.7px;font-size:12px;color:#1e1e1e;letter-spacing:-0.24px;">Preview</div>
<div class="t" style="left:662.7px;top:140.2px;font-size:12px;color:#1e1e1e;letter-spacing:-0.13px;">Print...</div>
<div class="t" style="left:754.7px;top:103.5px;font-size:12px;color:#1e1e1e;letter-spacing:0.02px;">Export</div>
<div class="t" style="left:755.4px;top:140.2px;font-size:12px;color:#1e1e1e;letter-spacing:0.02px;">Export</div>
<div class="t" style="left:824.4px;top:72.1px;font-size:12px;color:#a3a3a3;letter-spacing:0.09px;">Document Map</div>
<div class="t" style="left:824.4px;top:94.0px;font-size:12px;color:#ffffff;letter-spacing:-0.20px;">Parameter Area</div>
<div class="t" style="left:834.0px;top:140.2px;font-size:12px;color:#1e1e1e;">Settings</div>
<div class="t" style="left:45.9px;top:164.9px;font-size:11px;color:#1e1e1e;letter-spacing:-0.10px;">Welcome</div>
<div class="t" style="left:103.0px;top:164.7px;font-size:11px;color:#ffffff;letter-spacing:-0.11px;">SalesByRegionDashboard.trdx [Preview]</div>
<div class="t" style="left:58.6px;top:202.6px;font-size:36px;color:#111;letter-spacing:-0.27px;-webkit-text-stroke:0.9px #fff;">Bikes Sales Distribution by Region</div>
<div class="t" style="left:764.5px;top:203.7px;font-size:14.5px;color:#1a1a1a;letter-spacing:-0.11px;">REGION: United States, Canada</div>
<div class="t" style="left:764.5px;top:224.2px;font-size:14.5px;color:#1a1a1a;letter-spacing:-0.49px;">PERIOD: 2013 - 2014</div>
<div class="t" style="left:60.2px;top:271.4px;font-size:12.5px;color:#999999;letter-spacing:-0.41px;font-weight:700;">SALES VOLUME BY COUNTRY</div>
<div class="t" style="left:538.4px;top:271.4px;font-size:12.5px;color:#999999;letter-spacing:-0.53px;font-weight:700;">TOP 12 STATES</div>
<div class="t" style="left:60.2px;top:653.6px;font-size:12.5px;color:#999999;letter-spacing:-0.10px;font-weight:700;">SALES VOLUME, MONTHLY (in millions USD)</div>
<div class="t" style="left:512.7px;top:653.6px;font-size:12.5px;color:#999999;letter-spacing:-0.27px;font-weight:700;">SALES VOLUME BY PRODUCT CATEGORY (in millions USD)</div>
<div class="t" style="left:558.4px;top:292.9px;font-size:13px;color:#1a1a1a;letter-spacing:-0.05px;">California</div>
<div class="t" style="left:547.9px;top:315.1px;font-size:13px;color:#1a1a1a;letter-spacing:-0.29px;">Washington</div>
<div class="t" style="left:581.8px;top:337.1px;font-size:13px;color:#1a1a1a;letter-spacing:-0.60px;">Texas</div>
<div class="t" style="left:521.0px;top:359.9px;font-size:13px;color:#1a1a1a;letter-spacing:-0.18px;">British Columbia</div>
<div class="t" style="left:570.3px;top:381.5px;font-size:13px;color:#1a1a1a;letter-spacing:-0.01px;">Ontario</div>
<div class="t" style="left:570.8px;top:403.5px;font-size:13px;color:#1a1a1a;letter-spacing:-0.24px;">Oregon</div>
<div class="t" style="left:561.8px;top:425.4px;font-size:13px;color:#1a1a1a;letter-spacing:-0.17px;">Colorado</div>
<div class="t" style="left:564.3px;top:447.8px;font-size:13px;color:#1a1a1a;letter-spacing:0.11px;">Missouri</div>
<div class="t" style="left:570.3px;top:470.0px;font-size:13px;color:#1a1a1a;letter-spacing:-0.35px;">Arizona</div>
<div class="t" style="left:522.7px;top:492.2px;font-size:13px;color:#1a1a1a;letter-spacing:-0.17px;">New Hampshire</div>
<div class="t" style="left:574.3px;top:513.2px;font-size:13px;color:#1a1a1a;letter-spacing:-0.22px;">Florida</div>
<div class="t" style="left:569.3px;top:536.1px;font-size:13px;color:#1a1a1a;letter-spacing:-0.42px;">Quebec</div>
<div class="t" style="left:611.7px;top:565.4px;font-size:13px;color:#5f6778;letter-spacing:0.14px;">$0M</div>
<div class="t" style="left:700.2px;top:565.4px;font-size:13px;color:#5f6778;letter-spacing:0.14px;">$2M</div>
<div class="t" style="left:789.2px;top:565.4px;font-size:13px;color:#5f6778;letter-spacing:0.14px;">$4M</div>
<div class="t" style="left:878.2px;top:565.4px;font-size:13px;color:#5f6778;letter-spacing:0.14px;">$6M</div>
<div class="t" style="left:565.6px;top:598.6px;font-size:13px;color:#1a1a1a;letter-spacing:-0.26px;">Mountain Bikes</div>
<div class="t" style="left:682.5px;top:598.6px;font-size:13px;color:#1a1a1a;letter-spacing:-0.65px;">Road Bikes</div>
<div class="t" style="left:774.0px;top:598.6px;font-size:13px;color:#1a1a1a;letter-spacing:-0.33px;">Touring Bikes</div>
<div class="t" style="left:77.2px;top:599.2px;font-size:13px;color:#1a1a1a;letter-spacing:-0.21px;">Mountain Bikes</div>
<div class="t" style="left:194.0px;top:599.2px;font-size:13px;color:#1a1a1a;letter-spacing:-0.56px;">Road Bikes</div>
<div class="t" style="left:286.2px;top:599.2px;font-size:13px;color:#1a1a1a;letter-spacing:-0.33px;">Touring Bikes</div>
<div class="t" style="left:80.2px;top:678.0px;font-size:13px;color:#5f6778;letter-spacing:0.59px;">$3M</div>
<div class="t" style="left:70.5px;top:701.8px;font-size:13px;color:#5f6778;letter-spacing:-0.09px;">$2.5M</div>
<div class="t" style="left:81.0px;top:725.0px;font-size:13px;color:#5f6778;letter-spacing:-0.13px;">$2M</div>
<div class="t" style="left:71.6px;top:748.0px;font-size:13px;color:#5f6778;letter-spacing:-0.38px;">$1.5M</div>
<div class="t" style="left:81.3px;top:771.0px;font-size:13px;color:#5f6778;">$1M</div>
<div class="t" style="left:122.8px;top:790.2px;font-size:13px;color:#5f6778;letter-spacing:-1.54px;">Jan</div>
<div class="t" style="left:153.7px;top:790.2px;font-size:13px;color:#5f6778;letter-spacing:-0.14px;">Feb</div>
<div class="t" style="left:182.9px;top:790.2px;font-size:13px;color:#5f6778;letter-spacing:0.73px;">Mar</div>
<div class="t" style="left:217.5px;top:790.2px;font-size:13px;color:#5f6778;">Apr</div>
<div class="t" style="left:246.0px;top:790.2px;font-size:13px;color:#5f6778;letter-spacing:0.04px;">May</div>
<div class="t" style="left:282.0px;top:790.2px;font-size:13px;color:#5f6778;letter-spacing:-1.04px;">Jun</div>
<div class="t" style="left:315.3px;top:790.2px;font-size:13px;color:#5f6778;letter-spacing:-0.55px;">Jul</div>
<div class="t" style="left:344.3px;top:790.2px;font-size:13px;color:#5f6778;letter-spacing:0.31px;">Aug</div>
<div class="t" style="left:377.2px;top:790.2px;font-size:13px;color:#5f6778;letter-spacing:-0.59px;">Sep</div>
<div class="t" style="left:409.3px;top:790.2px;font-size:13px;color:#5f6778;letter-spacing:0.73px;">Oct</div>
<div class="t" style="left:440.5px;top:790.2px;font-size:13px;color:#5f6778;letter-spacing:1.18px;">Nov</div>
<div class="t" style="left:472.9px;top:790.2px;font-size:13px;color:#5f6778;letter-spacing:-0.59px;">Dec</div>
<div class="t" style="left:563.5px;top:717.8px;font-size:13px;color:#5f6778;letter-spacing:-0.05px;">Bikes</div>
<div class="t" style="left:595.7px;top:791.0px;font-size:13px;color:#5f6778;letter-spacing:0.14px;">$0M</div>
<div class="t" style="left:650.0px;top:791.0px;font-size:13px;color:#5f6778;letter-spacing:0.03px;">$10M</div>
<div class="t" style="left:707.7px;top:791.0px;font-size:13px;color:#5f6778;letter-spacing:0.03px;">$20M</div>
<div class="t" style="left:764.4px;top:791.0px;font-size:13px;color:#5f6778;letter-spacing:0.03px;">$30M</div>
<div class="t" style="left:821.6px;top:791.0px;font-size:13px;color:#5f6778;letter-spacing:0.03px;">$40M</div>
<div class="t" style="left:894.0px;top:725.0px;font-size:13px;color:#1a1a1a;letter-spacing:-0.37px;">2013</div>
<div class="t" style="left:894.0px;top:746.6px;font-size:13px;color:#1a1a1a;letter-spacing:-0.37px;">2014</div>
</body></html>
